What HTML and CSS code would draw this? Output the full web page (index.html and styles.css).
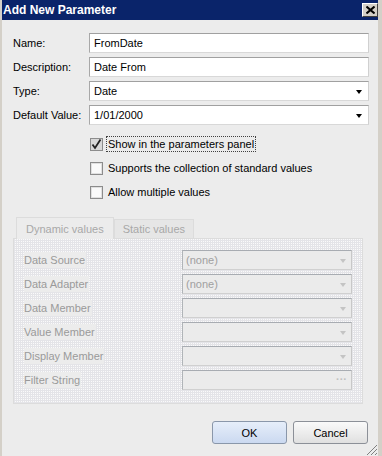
FILE: index.html
```html
<!DOCTYPE html>
<html lang="en">
<head>
    <meta charset="UTF-8">
    <title>Add New Parameter</title>
    <link rel="stylesheet" href="styles.css">
</head>
<body>
    <div class="window">
        <div class="titlebar">
            <span class="title">Add New Parameter</span>
            <button class="close-button">
                <svg width="9" height="8" viewBox="0 0 9 8"><path d="M0.5 0.5 L8.5 7.5 M8.5 0.5 L0.5 7.5" stroke="#000" stroke-width="2"/></svg>
            </button>
        </div>

        <div class="dialog-body">
            <div class="fields">
                <label class="field-label">Name:</label>
                <div class="input">FromDate</div>
                <label class="field-label">Description:</label>
                <div class="input">Date From</div>
                <label class="field-label">Type:</label>
                <div class="input select">Date<span class="arrow"></span></div>
                <label class="field-label">Default Value:</label>
                <div class="input select">1/01/2000<span class="arrow"></span></div>
            </div>

            <div class="checks">
                <div class="check-row">
                    <span class="checkbox checked">
                        <svg width="11" height="11" viewBox="0 0 11 11"><path d="M1.5 5.5 L4 9 L9.5 0.5" fill="none" stroke="#222" stroke-width="1.8"/></svg>
                    </span>
                    <span class="check-text focused">Show in the parameters panel</span>
                </div>
                <div class="check-row">
                    <span class="checkbox"></span>
                    <span class="check-text">Supports the collection of standard values</span>
                </div>
                <div class="check-row">
                    <span class="checkbox"></span>
                    <span class="check-text">Allow multiple values</span>
                </div>
            </div>

            <!-- 無効状態のタブ -->
            <div class="tabs">
                <div class="tab active">Dynamic values</div>
                <div class="tab">Static values</div>
            </div>
            <div class="panel">
                <span class="panel-label">Data Source</span>
                <div class="combo">(none)<span class="arrow"></span></div>
                <span class="panel-label">Data Adapter</span>
                <div class="combo">(none)<span class="arrow"></span></div>
                <span class="panel-label">Data Member</span>
                <div class="combo"><span class="arrow"></span></div>
                <span class="panel-label">Value Member</span>
                <div class="combo"><span class="arrow"></span></div>
                <span class="panel-label">Display Member</span>
                <div class="combo"><span class="arrow"></span></div>
                <span class="panel-label">Filter String</span>
                <div class="combo"><span class="dots">···</span></div>
            </div>

            <div class="buttons">
                <button class="btn btn-ok">OK</button>
                <button class="btn">Cancel</button>
            </div>
        </div>

        <svg class="grip" width="12" height="12" viewBox="0 0 12 12">
            <path d="M11 1 L1 11 M11 5 L5 11 M11 9 L9 11" stroke="#808080" stroke-width="1"/>
        </svg>
    </div>
</body>
</html>
```

FILE: styles.css
```css
body, html {
    margin: 0;
    padding: 0;
    width: 100%;
    height: 100%;
    font-family: "Liberation Sans", "DejaVu Sans", sans-serif;
    font-size: 11px;
    background: #d4d0c8;
}

.window {
    position: relative;
    height: 456px;
    box-sizing: border-box;
    border-left: 2px solid #d4d0c8;
    border-right: 4px solid #d4d0c8;
    background: #ececec;
}

.titlebar {
    height: 20px;
    background: #0a246a;
    display: flex;
    align-items: center;
    justify-content: space-between;
    padding: 0 0 0 1px;
}

.title {
    color: #fff;
    font-weight: bold;
    font-size: 12px;
}

.close-button {
    width: 16px;
    height: 14px;
    margin-right: 0;
    padding: 0;
    background: #d4d0c8;
    border: 1px solid;
    border-color: #fff #404040 #404040 #fff;
    display: flex;
    align-items: center;
    justify-content: center;
}

.dialog-body {
    padding: 13px 9px 0 11px;
}

.fields {
    display: grid;
    grid-template-columns: 76px 1fr;
    grid-auto-rows: 20px;
    row-gap: 4px;
    align-items: center;
}

.field-label {
    color: #000;
}

.input {
    position: relative;
    height: 20px;
    box-sizing: border-box;
    background: #fff;
    border: 1px solid;
    border-color: #a0a0a0 #d0d0d0 #d8d8d8 #a8a8a8;
    padding-left: 4px;
    line-height: 18px;
    color: #000;
}

.arrow {
    position: absolute;
    right: 6px;
    top: 8px;
    width: 0;
    height: 0;
    border-left: 3px solid transparent;
    border-right: 3px solid transparent;
    border-top: 4px solid #000;
}

.checks {
    margin-top: 7px;
    padding-left: 77px;
}

.check-row {
    height: 24px;
    display: flex;
    align-items: center;
    gap: 3px;
}

.checkbox {
    width: 13px;
    height: 13px;
    box-sizing: border-box;
    border: 1px solid #8c8c8c;
    background: #fafafa;
    box-shadow: inset 0 0 0 1px #e0e0e0;
    display: flex;
    align-items: flex-end;
    justify-content: center;
}

.checkbox.checked {
    background: #d8d8d8;
    box-shadow: none;
}

.checkbox svg {
    margin-bottom: 0;
}

.check-text {
    padding: 1px 1px;
    color: #000;
    border: 1px dotted transparent;
}

.check-text.focused {
    border-color: #404040;
}

.tabs {
    margin-top: 12px;
    margin-left: 3px;
    display: flex;
    align-items: flex-end;
    height: 22px;
}

.tab {
    box-sizing: border-box;
    height: 19px;
    padding: 0 8px;
    line-height: 18px;
    color: #a8a8a8;
    border: 1px solid #dcdcdc;
    border-bottom: none;
    background: #e6e6e6;
}

.tab.active {
    height: 22px;
    line-height: 22px;
    padding: 0 9px;
    background: #ececec;
    margin-bottom: -1px;
    position: relative;
    z-index: 1;
}

.panel {
    box-sizing: border-box;
    width: 350px;
    height: 166px;
    border: 1px solid #dcdcdc;
    background: conic-gradient(#fafafa 0 25%, #e4e4e8 0) 0 0 / 2px 2px;
    padding: 11px 11px 13px 10px;
    display: grid;
    grid-template-columns: 158px 170px;
    grid-auto-rows: 20px;
    row-gap: 4px;
    align-items: center;
}

.panel-label {
    justify-self: start;
    color: #9a9a9a;
    background: #ececec;
    padding: 2px 1px 2px 0;
}

.combo {
    position: relative;
    height: 20px;
    box-sizing: border-box;
    background: #ebebeb;
    border: 1px solid;
    border-color: #a8acb2 #c8c8c8 #d0d0d0 #b0b4b8;
    padding-left: 3px;
    line-height: 18px;
    color: #a0a0a0;
}

.combo .arrow {
    right: 5px;
    border-top-color: #c4c4c4;
}

.dots {
    position: absolute;
    right: 4px;
    top: -1px;
    font-weight: bold;
    color: #c0c0c0;
    letter-spacing: 0;
}

.buttons {
    margin-top: 17px;
    display: flex;
    justify-content: flex-end;
    gap: 6px;
    padding-right: 1px;
}

.btn {
    width: 75px;
    height: 23px;
    font-family: inherit;
    font-size: 11px;
    color: #000;
    border: 1px solid #8c9098;
    border-radius: 3px;
    background: linear-gradient(#fafafa, #e0e0e0);
    padding: 0;
}

.btn-ok {
    border-color: #8a97aa;
    background: linear-gradient(#e6eefa, #cbd9f0);
}

.grip {
    position: absolute;
    right: 0;
    bottom: 0;
}
```
